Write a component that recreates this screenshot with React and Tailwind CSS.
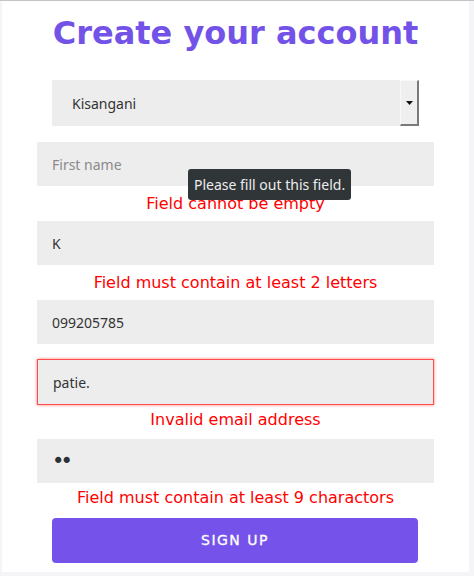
import React from 'react';

const baseCls = "block w-full h-[44px] bg-[#ededed] px-[15px] outline-none";
const inputCls =
  baseCls + " text-[14px] text-[#333] font-['Noto_Sans',sans-serif] placeholder:text-[#8a8a8a]";

const ErrorText = ({ children, className = "" }) => (
  <p className={"text-center text-[16px] leading-[20px] text-[#ff0000] font-['DejaVu_Sans',sans-serif] " + className}>
    {children}
  </p>
);

export default function App() {
  return (
    <div className="min-h-[576px] bg-[#f5f5f7] border-t border-[#c4c4c4] flex">
      <div className="ml-[2px] w-[467px] h-[571px] bg-white">
        <h1 className="mt-[12px] text-center text-[32px] leading-[40px] font-bold text-[#7352e8] font-['DejaVu_Sans',sans-serif]">
          Create your account
        </h1>

        {/* city select */}
        <div className="mt-[27px] mx-[50px] h-[46px] bg-[#ededed] flex items-center">
          <span className="flex-1 pl-[20px] text-[14px] text-[#333] font-['Noto_Sans',sans-serif]">Kisangani</span>
          <div className="w-[19px] h-full flex items-center justify-center bg-[#efefef] border-l border-t border-[#f8f8f8] border-r-2 border-b-2 border-r-[#7a7a7a] border-b-[#7a7a7a]">
            <svg width="7" height="4" viewBox="0 0 7 4">
              <path d="M0 0h7L3.5 4z" fill="#111" />
            </svg>
          </div>
        </div>

        <div className="mx-[35px] mt-[16px]">
          <div className="relative">
            <input className={inputCls} placeholder="First name" />
            <div className="absolute left-[151px] top-[27px] h-[31px] px-[6px] rounded-[3px] bg-[#303538] text-[#ececec] text-[14px] flex items-center font-['Noto_Sans',sans-serif]">
              Please fill out this field.
            </div>
          </div>
          <ErrorText className="mt-[8px]">Field cannot be empty</ErrorText>

          <input className={inputCls + " mt-[7px]"} defaultValue="K" />
          <ErrorText className="mt-[8px]">Field must contain at least 2 letters</ErrorText>

          <input className={inputCls + " mt-[7px]"} defaultValue="099205785" />

          <input
            className={inputCls + " mt-[15px] h-[46px] border border-[#ff4d4d] shadow-[0_0_3px_#ff7b7b]"}
            defaultValue="patie."
          />
          <ErrorText className="mt-[5px]">Invalid email address</ErrorText>

          <input
            className={baseCls + " mt-[9px] text-[21px] tracking-[-4px] text-[#2b3035] font-['DejaVu_Sans',sans-serif]"}
            type="password"
            defaultValue="ab"
          />
          <ErrorText className="mt-[5px]">Field must contain at least 9 charactors</ErrorText>
        </div>

        <button className="block mt-[10px] ml-[50px] w-[366px] h-[45px] rounded-[4px] bg-[#7553ea] text-white text-[14px] font-normal tracking-[1.5px] [-webkit-text-stroke:0.3px_white] font-['DejaVu_Sans',sans-serif]">
          SIGN UP
        </button>
      </div>
    </div>
  );
}
